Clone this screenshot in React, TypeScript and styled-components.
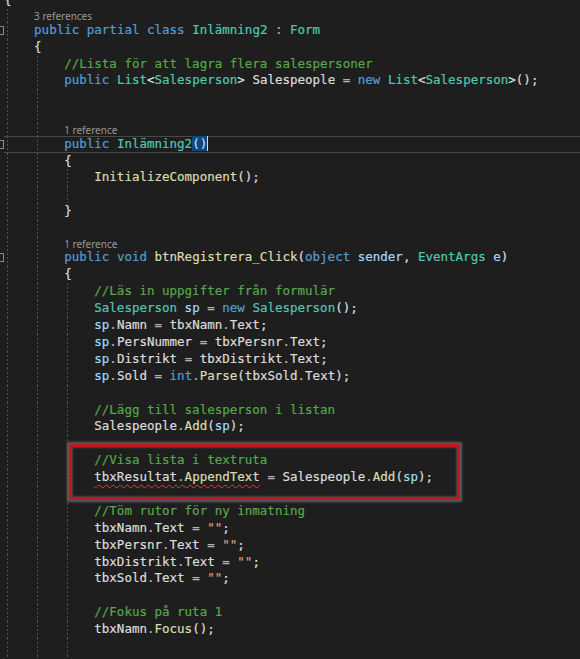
import React from 'react';
import styled, { createGlobalStyle } from 'styled-components';

const GlobalStyle = createGlobalStyle`
  html, body {
    margin: 0;
    padding: 0;
    background: #1e1e1e;
  }
`;

const MONO = `"DejaVu Sans Mono", "Liberation Mono", monospace`;
const LINE_H = 16.9;
const LENS_H = 12.5;

const palette = {
  k: '#569cd6', // keyword
  t: '#4ec9b0', // type
  m: '#dcdcaa', // method
  v: '#9cdcfe', // local / parameter
  p: '#dcdcdc', // plain identifier, punctuation
  o: '#b4b4b4', // operator
  s: '#d69d85', // string
  c: '#57a64a', // comment
};

type Kind = keyof typeof palette;
type Flag = 'squiggle' | 'brace' | 'caret';
interface Tok {
  c: Kind;
  text: string;
  flag?: Flag;
}

const tok =
  (c: Kind) =>
  (text: string, flag?: Flag): Tok => ({ c, text, flag });
const k = tok('k');
const t = tok('t');
const m = tok('m');
const v = tok('v');
const p = tok('p');
const o = tok('o');
const s = tok('s');
const c = tok('c');
const _ = p(' ');
const dot = o('.');
const eq = [_, o('='), _];
const caret: Tok = { c: 'p', text: '', flag: 'caret' };

interface Line {
  indent: number;
  lens?: string;
  toks?: Tok[];
  fold?: boolean;
  current?: boolean;
}

const L = (indent: number, toks: Tok[], extra: Partial<Line> = {}): Line => ({
  indent,
  toks,
  ...extra,
});
const lens = (indent: number, text: string): Line => ({ indent, lens: text });
const blank = (indent: number): Line => ({ indent, toks: [] });

const clearBox = (name: string) => [p(name), dot, p('Text'), ...eq, s('""'), p(';')];

const before: Line[] = [
  L(0, [p('{')]),
  lens(1, '3 references'),
  L(1, [k('public'), _, k('partial'), _, k('class'), _, t('Inlämning2'), _, o(':'), _, t('Form')], {
    fold: true,
  }),
  L(1, [p('{')]),
  L(2, [c('//Lista för att lagra flera salespersoner')]),
  L(2, [
    k('public'), _, t('List'), p('<'), t('Salesperson'), p('>'), _, p('Salespeople'), ...eq,
    k('new'), _, t('List'), p('<'), t('Salesperson'), p('>();'),
  ]),
  blank(2),
  blank(2),
  lens(2, '1 reference'),
  L(2, [k('public'), _, t('Inlämning2'), p('()', 'brace'), caret], { fold: true, current: true }),
  L(2, [p('{')]),
  L(3, [m('InitializeComponent'), p('();')]),
  blank(3),
  L(2, [p('}')]),
  blank(2),
  lens(2, '1 reference'),
  L(2, [
    k('public'), _, k('void'), _, m('btnRegistrera_Click'), p('('), k('object'), _, v('sender'),
    p(','), _, t('EventArgs'), _, v('e'), p(')'),
  ], { fold: true }),
  L(2, [p('{')]),
  L(3, [c('//Läs in uppgifter från formulär')]),
  L(3, [t('Salesperson'), _, v('sp'), ...eq, k('new'), _, t('Salesperson'), p('();')]),
  L(3, [v('sp'), dot, p('Namn'), ...eq, p('tbxNamn'), dot, p('Text'), p(';')]),
  L(3, [v('sp'), dot, p('PersNummer'), ...eq, p('tbxPersnr'), dot, p('Text'), p(';')]),
  L(3, [v('sp'), dot, p('Distrikt'), ...eq, p('tbxDistrikt'), dot, p('Text'), p(';')]),
  L(3, [
    v('sp'), dot, p('Sold'), ...eq, k('int'), dot, m('Parse'), p('('), p('tbxSold'), dot, p('Text'),
    p(');'),
  ]),
  blank(3),
  L(3, [c('//Lägg till salesperson i listan')]),
  L(3, [p('Salespeople'), dot, m('Add'), p('('), v('sp'), p(');')]),
  blank(3),
];

const callout: Line[] = [
  L(3, [c('//Visa lista i textruta')]),
  L(3, [
    p('tbxResultat', 'squiggle'), o('.', 'squiggle'), m('AppendText', 'squiggle'), ...eq,
    p('Salespeople'), dot, m('Add'), p('('), v('sp'), p(');'),
  ]),
];

const after: Line[] = [
  blank(3),
  L(3, [c('//Töm rutor för ny inmatning')]),
  L(3, clearBox('tbxNamn')),
  L(3, clearBox('tbxPersnr')),
  L(3, clearBox('tbxDistrikt')),
  L(3, clearBox('tbxSold')),
  blank(3),
  L(3, [c('//Fokus på ruta 1')]),
  L(3, [p('tbxNamn'), dot, m('Focus'), p('();')]),
  blank(3),
  blank(3),
];

const Editor = styled.div`
  width: 580px;
  height: 659px;
  overflow: hidden;
  background: #1e1e1e;
  color: #dcdcdc;
  font-family: ${MONO};
  font-size: 12.5px;
`;

/* the view is scrolled a little past the namespace brace */
const Scrolled = styled.div`
  margin-top: -7.6px;
`;

const Row = styled.div<{ $h: number }>`
  display: flex;
  height: ${(props) => props.$h}px;
  line-height: ${(props) => props.$h}px;
  white-space: pre;
`;

const Margin = styled.div`
  flex: none;
  width: 4px;
  display: flex;
  align-items: center;
  justify-content: flex-end;
  overflow: hidden;
`;

const FoldMark = styled.span`
  flex: none;
  width: 9px;
  height: 9px;
  box-sizing: border-box;
  border: 1px solid #8a8a8a;
`;

const Body = styled.div<{ $current?: boolean }>`
  flex: 1;
  display: flex;
  min-width: 0;
  box-shadow: ${(props) =>
    props.$current ? 'inset 0 1px #484848, inset 0 -1px #484848' : 'none'};
`;

const Indent = styled.span<{ $guide: boolean }>`
  flex: none;
  width: 4ch;
  height: 100%;
  font-family: ${MONO};
  background: ${(props) =>
    props.$guide
      ? 'repeating-linear-gradient(to bottom, #505050 0 2px, transparent 2px 4px) 3px 0 / 1px 100% no-repeat'
      : 'none'};
`;

const Code = styled.span`
  flex: 1;
  -webkit-text-stroke: 0.2px currentColor;
`;

const Span = styled.span<{ $c: string }>`
  color: ${(props) => props.$c};
`;

const Squiggle = styled.span`
  text-decoration: underline wavy #e8383d;
  text-decoration-thickness: 1px;
  text-underline-offset: 3px;
`;

const Brace = styled.span`
  background: #0e4583;
  color: #c8d8ec;
`;

const Caret = styled.span`
  display: inline-block;
  width: 1px;
  height: 15px;
  background: #d8d8d8;
  vertical-align: -3px;
`;

const LensText = styled.span`
  font-family: 'Noto Sans', 'Open Sans', sans-serif;
  font-size: 10px;
  color: #999999;
  line-height: ${LENS_H}px;
  padding-top: 1px;
`;

const Callout = styled.div`
  position: relative;

  &::after {
    content: '';
    position: absolute;
    top: -8px;
    left: 69px;
    width: 391px;
    height: 56px;
    box-sizing: border-box;
    border: 3px solid #c4161c;
    box-shadow: 0 0 2px 2px rgba(105, 105, 105, 0.85),
      inset 0 0 2px 1px rgba(90, 90, 90, 0.7);
    pointer-events: none;
  }
`;

function renderToks(toks: Tok[]) {
  const out: React.ReactNode[] = [];
  let i = 0;
  while (i < toks.length) {
    const tk = toks[i];
    if (tk.flag === 'squiggle') {
      const group: Tok[] = [];
      const start = i;
      while (i < toks.length && toks[i].flag === 'squiggle') group.push(toks[i++]);
      out.push(
        <Squiggle key={start}>
          {group.map((g, j) => (
            <Span key={j} $c={palette[g.c]}>
              {g.text}
            </Span>
          ))}
        </Squiggle>,
      );
      continue;
    }
    if (tk.flag === 'brace') out.push(<Brace key={i}>{tk.text}</Brace>);
    else if (tk.flag === 'caret') out.push(<Caret key={i} />);
    else
      out.push(
        <Span key={i} $c={palette[tk.c]}>
          {tk.text}
        </Span>,
      );
    i++;
  }
  return out;
}

function CodeRow({ line }: { line: Line }) {
  const indents = Array.from({ length: line.indent }, (_x, i) => <Indent key={i} $guide />);
  if (line.lens) {
    return (
      <Row $h={LENS_H}>
        <Margin />
        <Body>
          {indents}
          <LensText>{line.lens}</LensText>
        </Body>
      </Row>
    );
  }
  return (
    <Row $h={LINE_H}>
      <Margin>{line.fold && <FoldMark />}</Margin>
      <Body $current={line.current}>
        {indents}
        <Code>{renderToks(line.toks ?? [])}</Code>
      </Body>
    </Row>
  );
}

export default function App() {
  return (
    <>
      <GlobalStyle />
      <Editor>
        <Scrolled>
          {before.map((line, i) => (
            <CodeRow key={`b${i}`} line={line} />
          ))}
          <Callout>
            {callout.map((line, i) => (
              <CodeRow key={`c${i}`} line={line} />
            ))}
          </Callout>
          {after.map((line, i) => (
            <CodeRow key={`a${i}`} line={line} />
          ))}
        </Scrolled>
      </Editor>
    </>
  );
}
